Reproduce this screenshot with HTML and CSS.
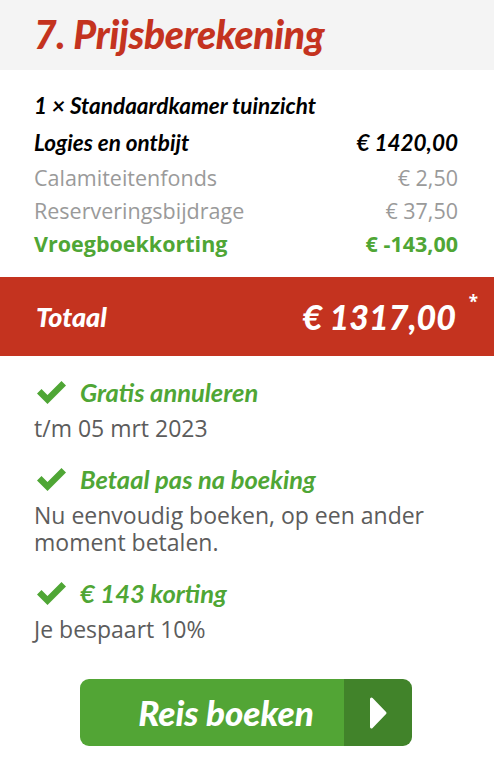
FILE: index.html
```html
<!DOCTYPE html>
<html lang="nl">
<head>
<meta charset="utf-8">
<link rel="stylesheet" href="styles.css">
</head>
<body>
<div class="panel">
  <header class="head"><h2 class="title">7. Prijsberekening</h2></header>
  <section class="lines">
    <div class="row room"><span>1 × Standaardkamer tuinzicht</span></div>
    <div class="row strong"><span>Logies en ontbijt</span><span>€ 1420,00</span></div>
    <div class="row muted"><span>Calamiteitenfonds</span><span>€ 2,50</span></div>
    <div class="row muted"><span>Reserveringsbijdrage</span><span>€ 37,50</span></div>
    <div class="row discount"><span>Vroegboekkorting</span><span>€ -143,00</span></div>
  </section>
  <section class="total">
    <span class="total-label">Totaal</span>
    <span class="total-price">€ 1317,00<sup class="star">*</sup></span>
  </section>
  <section class="perks">
    <div class="perk">
      <div class="perk-title"><svg class="check" viewBox="0 0 29 23"><path d="M0 12.5 L4.5 8 L10.5 14 L24.5 0 L29 4.5 L10.5 23 Z" fill="#4fa635"/></svg><span>Gratis annuleren</span></div>
      <p class="perk-text">t/m 05 mrt 2023</p>
    </div>
    <div class="perk">
      <div class="perk-title"><svg class="check" viewBox="0 0 29 23"><path d="M0 12.5 L4.5 8 L10.5 14 L24.5 0 L29 4.5 L10.5 23 Z" fill="#4fa635"/></svg><span>Betaal pas na boeking</span></div>
      <p class="perk-text">Nu eenvoudig boeken, op een ander moment betalen.</p>
    </div>
    <div class="perk">
      <div class="perk-title"><svg class="check" viewBox="0 0 29 23"><path d="M0 12.5 L4.5 8 L10.5 14 L24.5 0 L29 4.5 L10.5 23 Z" fill="#4fa635"/></svg><span>€ 143 korting</span></div>
      <p class="perk-text">Je bespaart 10%</p>
    </div>
  </section>
  <div class="cta-wrap">
    <a class="cta" href="#"><span class="cta-label">Reis boeken</span><span class="cta-arrow"><svg viewBox="0 0 20 34" width="20" height="34"><path d="M3.5 3 L17 17 L3.5 31 Z" fill="#fff" stroke="#fff" stroke-width="3" stroke-linejoin="round"/></svg></span></a>
  </div>
</div>
</body>
</html>
```

FILE: styles.css
```css
* { box-sizing: border-box; }
html, body { margin: 0; padding: 0; background: #fff; }
body { font-family: "Open Sans", "Liberation Sans", sans-serif; width: 494px; }
.panel { width: 494px; }
.head { background: #f4f4f4; height: 70px; padding: 0 34px 2px; display: flex; align-items: center; }
.title { margin: 0; font-family: Lato, "Open Sans", sans-serif; font-style: italic; font-weight: 900; font-size: 39px; color: #c4331f; letter-spacing: -0.3px; }
.lines { padding: 17px 36px 17px 34px; }
.row { display: flex; justify-content: space-between; align-items: center; height: 33px; font-size: 21.5px; }
.row.room, .row.strong { font-family: Lato, sans-serif; font-style: italic; font-weight: 700; font-size: 22.5px; color: #000; }
.row.room { height: 36px; }
.row.strong { height: 38px; }
.row.muted { color: #9a9a9a; }
.row.discount { color: #4fa635; font-weight: 700; }
.total { background: #c4331f; height: 79px; display: flex; justify-content: space-between; align-items: center; padding: 0 16px 0 36px; color: #fff; font-family: Lato, sans-serif; font-style: italic; font-weight: 900; }
.total-label { font-size: 27px; }
.total-price { font-size: 34px; position: relative; padding-right: 22px; }
.star { position: absolute; right: 0; top: -6px; font-size: 17px; font-style: normal; font-weight: 700; font-family: "Open Sans", sans-serif; }
.perks { padding: 19px 36px 0 34px; }
.perk { margin-bottom: 20px; }
.perk-title { display: flex; align-items: center; gap: 14px; font-family: Lato, sans-serif; font-style: italic; font-weight: 700; font-size: 25.5px; color: #4fa635; height: 34px; padding-left: 3px; }
.check { width: 29px; height: 23px; flex: none; }
.perk-text { margin: 6px 0 0; font-size: 23px; line-height: 27px; color: #5c5c5c; }
.cta-wrap { display: flex; justify-content: center; padding: 16px 2px 0 0; }
.cta { display: flex; width: 332px; height: 67px; border-radius: 9px; overflow: hidden; text-decoration: none; }
.cta-label { flex: 1; background: #52a535; color: #fff; display: flex; align-items: center; justify-content: center; font-family: Lato, sans-serif; font-style: italic; font-weight: 900; font-size: 35px; padding: 0 0 2px 28px; }
.cta-arrow { width: 68px; background: #41832a; display: flex; align-items: center; justify-content: center; }
```
